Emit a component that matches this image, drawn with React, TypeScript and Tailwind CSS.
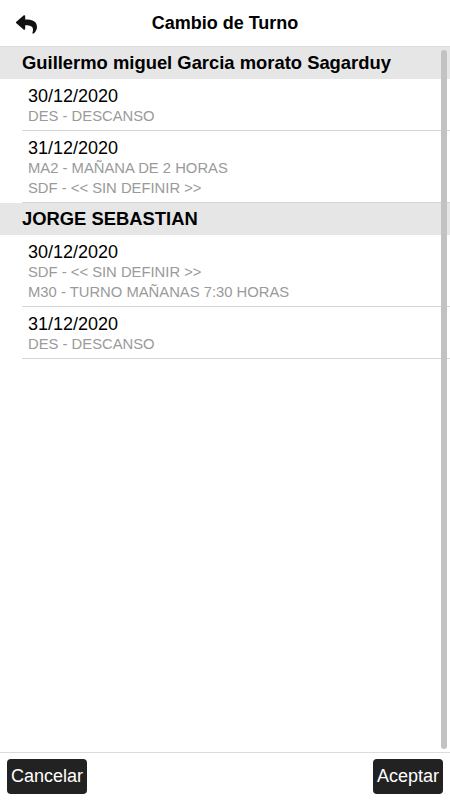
import React from 'react'
import { FaReply } from 'react-icons/fa'

type Turno = { fecha: string; lineas: string[] }
type Grupo = { nombre: string; turnos: Turno[] }

const grupos: Grupo[] = [
  {
    nombre: 'Guillermo miguel Garcia morato Sagarduy',
    turnos: [
      { fecha: '30/12/2020', lineas: ['DES - DESCANSO'] },
      { fecha: '31/12/2020', lineas: ['MA2 - MAÑANA DE 2 HORAS', 'SDF - << SIN DEFINIR >>'] },
    ],
  },
  {
    nombre: 'JORGE SEBASTIAN',
    turnos: [
      { fecha: '30/12/2020', lineas: ['SDF - << SIN DEFINIR >>', 'M30 - TURNO MAÑANAS 7:30 HORAS'] },
      { fecha: '31/12/2020', lineas: ['DES - DESCANSO'] },
    ],
  },
]

export default function App() {
  return (
    <div className="flex h-[800px] w-[450px] flex-col bg-white font-['Liberation_Sans',Arial,sans-serif] text-black">
      <header className="relative flex h-[47px] shrink-0 items-center justify-center border-b border-[#dcdcdc]">
        <button className="absolute left-[16px] top-[14px] text-[#111]">
          <FaReply className="h-[21px] w-[21px]" />
        </button>
        <h1 className="text-[18px] font-bold">Cambio de Turno</h1>
      </header>

      <div className="relative flex-1 overflow-hidden">
        {grupos.map((g) => (
          <section key={g.nombre}>
            <div className="flex h-[32px] items-center bg-[#e6e6e6] px-[22px] text-[18.4px] font-bold leading-none">
              {g.nombre}
            </div>
            {g.turnos.map((t, i) => (
              <div key={i} className="ml-[22px] border-b border-[#d4d4d4] pl-[6px] pt-[7px] pb-[4px]">
                <div className="text-[18px] leading-[20px]">{t.fecha}</div>
                {t.lineas.map((l) => (
                  <div key={l} className="text-[14.8px] leading-[20px] text-[#9a9a9a]">
                    {l}
                  </div>
                ))}
              </div>
            ))}
          </section>
        ))}
        <div className="absolute right-[3px] top-[3px] bottom-[3px] w-[6px] rounded-full bg-[#c2c2c2]" />
      </div>

      <footer className="flex h-[48px] shrink-0 items-start justify-between border-t border-[#dcdcdc] px-[7px] pt-[6px]">
        <button className="h-[35px] rounded-[4px] bg-[#222] px-[4px] text-[18px] text-white">Cancelar</button>
        <button className="h-[35px] rounded-[4px] bg-[#222] px-[4px] text-[18px] text-white">Aceptar</button>
      </footer>
    </div>
  )
}
